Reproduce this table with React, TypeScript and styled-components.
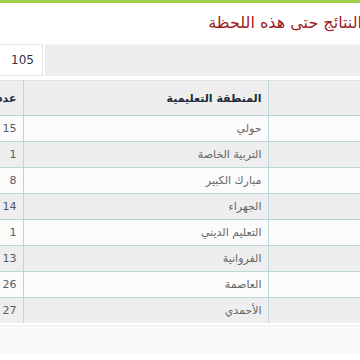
import { FC } from 'react'
import styled, { createGlobalStyle } from 'styled-components'

// results per educational district; the page is wider than the window,
// so it is shifted left a little to show the same cut as the original view

const rows = [
  { area: 'حولي', count: 15 },
  { area: 'التربية الخاصة', count: 1 },
  { area: 'مبارك الكبير', count: 8 },
  { area: 'الجهراء', count: 14 },
  { area: 'التعليم الديني', count: 1 },
  { area: 'الفروانية', count: 13 },
  { area: 'العاصمة', count: 26 },
  { area: 'الأحمدي', count: 27 },
]

const total = rows.reduce((sum, r) => sum + r.count, 0)

const App: FC = () => {
  return (
    <>
      <GlobalStyle />
      <Page>
        <TopBar />
        <Title>النتائج حتى هذه اللحظة</Title>
        <TotalRow>
          <TotalLabel />
          <TotalValue>{total}</TotalValue>
        </TotalRow>
        <Table>
          <thead>
            <tr>
              <HeadCell $width={102} />
              <HeadCell $width={245}>المنطقة التعليمية</HeadCell>
              <HeadCell>عدد الطلبة</HeadCell>
            </tr>
          </thead>
          <tbody>
            {rows.map((r, i) => (
              <Row key={r.area} $odd={i % 2 === 1}>
                <Cell />
                <Cell>{r.area}</Cell>
                <Cell>{r.count}</Cell>
              </Row>
            ))}
          </tbody>
        </Table>
        <Footer />
      </Page>
    </>
  )
}

const GlobalStyle = createGlobalStyle`
  html, body {
    margin: 0;
    padding: 0;
    background: #ffffff;
    overflow: hidden;
  }
`

const Page = styled.div`
  direction: rtl;
  width: 420px;
  margin-left: -50px;
  font-family: 'DejaVu Sans', 'Noto Sans', sans-serif;
`

const TopBar = styled.div`
  height: 3px;
  background-color: #9fd04c;
`

const Title = styled.h2`
  margin: 0;
  height: 41px;
  line-height: 40px;
  padding-right: 8px;
  font-size: 16px;
  font-weight: normal;
  color: #9e1a1e;
  white-space: nowrap;
`

const TotalRow = styled.div`
  display: flex;
  height: 32px;
  gap: 2px;
`

const TotalLabel = styled.div`
  flex: 1;
  background-color: #eeeeee;
  border-top: 1px solid #f6f6f6;
`

const TotalValue = styled.div`
  width: 93px;
  box-sizing: border-box;
  border: 1px solid #e6e6e6;
  background-color: #ffffff;
  padding-right: 8px;
  display: flex;
  align-items: center;
  justify-content: flex-end;
  direction: ltr;
  font-size: 12px;
  color: #2b3446;
`

const Table = styled.table`
  width: 100%;
  margin-top: 4px;
  border-collapse: collapse;
  table-layout: fixed;
  font-size: 11px;
`

const HeadCell = styled.th<{ $width?: number }>`
  box-sizing: border-box;
  width: ${(p) => (p.$width ? `${p.$width}px` : 'auto')};
  height: 35px;
  padding: 0 6px;
  text-align: right;
  font-weight: bold;
  color: #1e2a3a;
  background-color: #eeeeee;
  border-top: 1px solid #e2e2e2;
  border-left: 1px solid #b9d6da;
  border-bottom: 1px solid #b9d6da;
  white-space: nowrap;
  overflow: hidden;
`

const Row = styled.tr<{ $odd: boolean }>`
  background-color: ${(p) => (p.$odd ? '#eeeeee' : '#fbfbfb')};
`

const Cell = styled.td`
  height: 25px;
  padding: 0 6px;
  text-align: right;
  color: #666666;
  border-left: 1px solid #b9d6da;
  border-bottom: 1px solid #b9d6da;
  white-space: nowrap;

  &:last-child {
    color: #555b66;
  }

  tr:last-child > & {
    border-bottom: none;
  }
`

const Footer = styled.div`
  height: 28px;
  margin-top: 2px;
  background-color: #fafafa;
  border-top: 1px solid #f0f0f0;
`

export default App
